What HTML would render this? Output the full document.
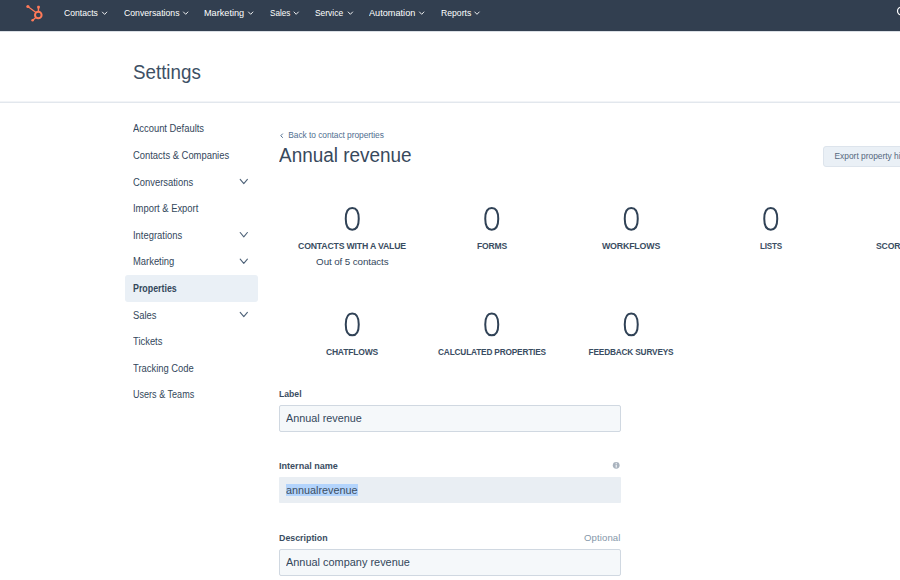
<!DOCTYPE html>
<html><head><meta charset="utf-8">
<style>
*{margin:0;padding:0;box-sizing:border-box}
html,body{width:900px;height:580px;overflow:hidden;background:#fff}
body{position:relative;font-family:"Liberation Sans",sans-serif;color:#33475b}
.t{position:absolute;line-height:1;white-space:nowrap}
#nav{position:absolute;left:0;top:0;width:900px;height:31px;background:#323f50}
.n{position:absolute;top:7.6px;font-size:9.8px;line-height:1;color:#fff;white-space:nowrap;transform-origin:0 0}
.chev{position:absolute}
.sb{position:absolute;left:133px;font-size:10px;line-height:1;white-space:nowrap;transform:scaleX(0.94);transform-origin:0 0}
.dg{position:absolute;font-size:32px;line-height:1;width:140px;text-align:center;font-weight:400}
.lb{position:absolute;font-size:9.6px;line-height:1;width:180px;text-align:center;font-weight:700;letter-spacing:-0.2px;color:#3a4d62}
.fl{position:absolute;left:279px;font-size:9.6px;line-height:1;font-weight:700;white-space:nowrap;color:#3a4d62;transform-origin:0 0}
.inp{position:absolute;left:279px;width:341.5px;background:#f5f8fa;border:1px solid #d0d8e1;border-radius:2px}
.it{position:absolute;left:286px;font-size:11.5px;line-height:1;white-space:nowrap;transform:scaleX(0.94);transform-origin:0 0}
</style></head><body>
<div style="position:absolute;left:0;top:31px;width:900px;height:1px;background:#dadfe5"></div>
<div id="nav">
  <svg style="position:absolute;left:0;top:0" width="60" height="31" viewBox="0 0 60 31">
    <g fill="none" stroke="#ff7a59" stroke-linecap="round">
      <circle cx="38.3" cy="15" r="3.3" stroke-width="2"/>
      <line x1="38.4" y1="11.5" x2="38.5" y2="7.5" stroke-width="1.4"/>
      <line x1="36" y1="12.5" x2="28.5" y2="7" stroke-width="1.2"/>
      <line x1="35.8" y1="17.5" x2="33" y2="20" stroke-width="1.2"/>
    </g>
    <g fill="#ff7a59">
      <rect x="37.2" y="5.8" width="2.6" height="2.6" rx="0.6"/>
      <circle cx="27.9" cy="6.5" r="1.6"/>
      <circle cx="32.6" cy="20.3" r="1.3"/>
    </g>
  </svg>
  <span class="n" style="left:63.8px;transform:scaleX(0.877)">Contacts</span>
  <span class="n" style="left:123.7px;transform:scaleX(0.887)">Conversations</span>
  <span class="n" style="left:204.4px;transform:scaleX(0.934)">Marketing</span>
  <span class="n" style="left:269.9px;transform:scaleX(0.828)">Sales</span>
  <span class="n" style="left:315.3px;transform:scaleX(0.860)">Service</span>
  <span class="n" style="left:369.1px;transform:scaleX(0.935)">Automation</span>
  <span class="n" style="left:440.9px;transform:scaleX(0.881)">Reports</span>
  <svg style="position:absolute;left:0;top:0" width="900" height="31" viewBox="0 0 900 31">
    <g fill="none" stroke="#fff" stroke-width="0.9" stroke-linecap="round" stroke-linejoin="round">
      <polyline points="102.4,12.1 104.6,14.4 106.8,12.1"/>
      <polyline points="183.5,12 185.7,14.3 187.9,12"/>
      <polyline points="248.5,12 250.7,14.3 252.9,12"/>
      <polyline points="294,12 296.2,14.3 298.4,12"/>
      <polyline points="348.2,12 350.4,14.3 352.6,12"/>
      <polyline points="419.5,12 421.7,14.3 423.9,12"/>
      <polyline points="474.8,12 477,14.3 479.2,12"/>
      <circle cx="901.5" cy="11" r="4" stroke-width="1.2"/>
    </g>
  </svg>
</div>

<span class="t" style="left:133.2px;top:62px;font-size:20px;transform:scaleX(0.938);transform-origin:0 0;color:#3d5064">Settings</span>
<div style="position:absolute;left:0;top:101px;width:900px;height:1px;background:#f2f4f7"></div><div style="position:absolute;left:0;top:102px;width:900px;height:1px;background:#e2e7ed"></div>

<div style="position:absolute;left:125px;top:275.3px;width:132.5px;height:26.4px;background:#eaf0f6;border-radius:3px"></div>
<span class="sb" style="top:124.35px">Account Defaults</span>
<span class="sb" style="top:150.95px">Contacts &amp; Companies</span>
<span class="sb" style="top:177.55px">Conversations</span>
<span class="sb" style="top:204.15px">Import &amp; Export</span>
<span class="sb" style="top:230.75px">Integrations</span>
<span class="sb" style="top:257.35px">Marketing</span>
<span class="sb" style="top:283.95px;font-weight:700;transform:scaleX(0.885);color:#33475b">Properties</span>
<span class="sb" style="top:310.55px">Sales</span>
<span class="sb" style="top:337.15px">Tickets</span>
<span class="sb" style="top:363.75px">Tracking Code</span>
<span class="sb" style="top:390.35px;transform:scaleX(0.905)">Users &amp; Teams</span>
<svg style="position:absolute;left:0;top:0" width="260" height="330" viewBox="0 0 260 330">
  <g fill="none" stroke="#4f6379" stroke-width="1.1" stroke-linecap="round" stroke-linejoin="round">
    <polyline points="240.2,179.3 243.8,183.6 247.4,179.3"/>
    <polyline points="240.2,232.5 243.8,236.8 247.4,232.5"/>
    <polyline points="240.2,259.1 243.8,263.4 247.4,259.1"/>
    <polyline points="240.2,312.3 243.8,316.6 247.4,312.3"/>
  </g>
</svg>

<svg style="position:absolute;left:276px;top:130px" width="10" height="10" viewBox="276 130 10 10"><polyline points="282.5,133.9 280.8,135.7 282.5,137.5" fill="none" stroke="#516f90" stroke-width="1" stroke-linecap="round" stroke-linejoin="round"/></svg>
<span class="t" style="left:288.3px;top:130.7px;font-size:8.4px;color:#516f90;letter-spacing:-0.05px">Back to contact properties</span>
<span class="t" style="left:279px;top:146.2px;font-size:19.5px;transform:scaleX(0.971);transform-origin:0 0;color:#38495c">Annual revenue</span>

<div style="position:absolute;left:823.2px;top:145.5px;width:120px;height:21.3px;background:#eaf0f6;border:1px solid #dde4ec;border-radius:3px"></div>
<span class="t" style="left:834.5px;top:151.9px;font-size:8.4px;color:#56697e">Export property history</span>

<svg style="position:absolute;left:0;top:0" width="900" height="580" viewBox="0 0 900 580"><g fill="none" stroke="#304256" stroke-width="2"><path d="M352.25,207.95 C356.15,207.95 358.75,211.66 358.75,218.85 C358.75,226.04 356.15,229.75 352.25,229.75 C348.35,229.75 345.75,226.04 345.75,218.85 C345.75,211.66 348.35,207.95 352.25,207.95Z"/><path d="M491.75,207.95 C495.65,207.95 498.25,211.66 498.25,218.85 C498.25,226.04 495.65,229.75 491.75,229.75 C487.85,229.75 485.25,226.04 485.25,218.85 C485.25,211.66 487.85,207.95 491.75,207.95Z"/><path d="M631.25,207.95 C635.15,207.95 637.75,211.66 637.75,218.85 C637.75,226.04 635.15,229.75 631.25,229.75 C627.35,229.75 624.75,226.04 624.75,218.85 C624.75,211.66 627.35,207.95 631.25,207.95Z"/><path d="M770.75,207.95 C774.65,207.95 777.25,211.66 777.25,218.85 C777.25,226.04 774.65,229.75 770.75,229.75 C766.85,229.75 764.25,226.04 764.25,218.85 C764.25,211.66 766.85,207.95 770.75,207.95Z"/><path d="M352.25,313.55 C356.15,313.55 358.75,317.26 358.75,324.45 C358.75,331.64 356.15,335.35 352.25,335.35 C348.35,335.35 345.75,331.64 345.75,324.45 C345.75,317.26 348.35,313.55 352.25,313.55Z"/><path d="M491.75,313.55 C495.65,313.55 498.25,317.26 498.25,324.45 C498.25,331.64 495.65,335.35 491.75,335.35 C487.85,335.35 485.25,331.64 485.25,324.45 C485.25,317.26 487.85,313.55 491.75,313.55Z"/><path d="M631.25,313.55 C635.15,313.55 637.75,317.26 637.75,324.45 C637.75,331.64 635.15,335.35 631.25,335.35 C627.35,335.35 624.75,331.64 624.75,324.45 C624.75,317.26 627.35,313.55 631.25,313.55Z"/></g></svg>
<div class="lb" style="left:262.3px;top:241.3px;transform:scaleX(0.908)">CONTACTS WITH A VALUE</div>
<div class="lb" style="left:401.8px;top:241.3px;transform:scaleX(0.894)">FORMS</div>
<div class="lb" style="left:541px;top:241.3px;transform:scaleX(0.921)">WORKFLOWS</div>
<div class="lb" style="left:680.5px;top:241.3px;transform:scaleX(0.846)">LISTS</div>
<div class="t" style="left:875.6px;top:241.3px;font-size:9.6px;font-weight:700;letter-spacing:-0.2px;color:#3a4d62;transform:scaleX(0.9);transform-origin:0 0">SCORE</div>
<div class="t" style="left:262.3px;width:180px;text-align:center;top:256.9px;font-size:9.8px;letter-spacing:-0.1px">Out of 5 contacts</div>

<div class="lb" style="left:262.3px;top:347px;transform:scaleX(0.888)">CHATFLOWS</div>
<div class="lb" style="left:401.8px;top:347px;transform:scaleX(0.862)">CALCULATED PROPERTIES</div>
<div class="lb" style="left:541px;top:347px;transform:scaleX(0.862)">FEEDBACK SURVEYS</div>

<span class="fl" style="top:388.9px;transform:scaleX(0.9)">Label</span>
<div class="inp" style="top:405px;height:26.6px"></div>
<span class="it" style="top:413.1px">Annual revenue</span>

<span class="fl" style="top:460.9px;transform:scaleX(0.944)">Internal name</span>
<svg style="position:absolute;left:612px;top:461px" width="9" height="9" viewBox="0 0 9 9">
  <circle cx="4.2" cy="4.3" r="3.4" fill="#a9b3be"/>
  <rect x="3.7" y="3.6" width="1" height="3" fill="#fff"/>
  <rect x="3.7" y="1.9" width="1" height="1" fill="#fff"/>
</svg>
<div style="position:absolute;left:279px;top:476.9px;width:341.6px;height:26.4px;background:#e9eef3;border-radius:1px"></div>
<div style="position:absolute;left:285.9px;top:483.9px;width:72px;height:12px;background:#b3d4fc"></div>
<span class="it" style="top:484.6px;color:#3d4e60">annualrevenue</span>

<span class="fl" style="top:533.1px;transform:scaleX(0.921)">Description</span>
<span class="t" style="right:279.5px;top:532.5px;font-size:9.6px;color:#8597a9;letter-spacing:0.1px">Optional</span>
<div class="inp" style="top:548.5px;height:27.6px"></div>
<span class="it" style="top:556.8px;transform:scaleX(0.95)">Annual company revenue</span>
</body></html>
